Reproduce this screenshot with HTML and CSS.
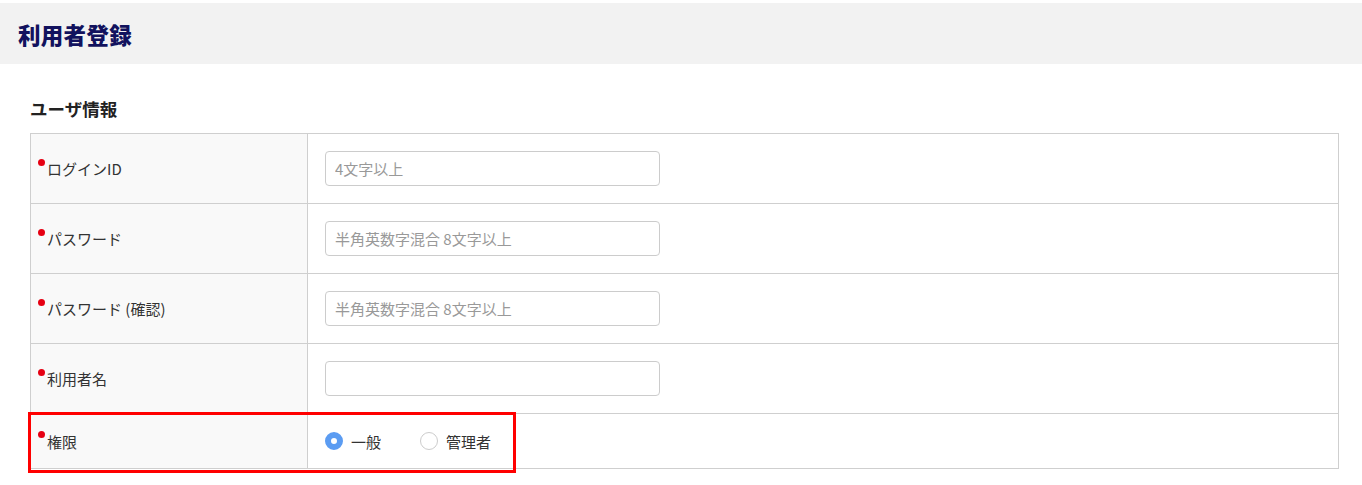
FILE: index.html
```html
<!DOCTYPE html>
<html lang="ja">
<head>
<meta charset="utf-8">
<title>利用者登録</title>
<link rel="stylesheet" href="styles.css">
</head>
<body>
<header class="page-header">
  <h1 class="page-title">利用者登録</h1>
</header>
<main class="content">
  <h2 class="section-title">ユーザ情報</h2>
  <div class="form-wrap">
    <div class="form">
      <div class="row">
        <div class="label"><span class="req"></span>ログインID</div>
        <div class="field"><input class="text-input" type="text" placeholder="4文字以上"></div>
      </div>
      <div class="row">
        <div class="label"><span class="req"></span>パスワード</div>
        <div class="field"><input class="text-input" type="password" placeholder="半角英数字混合 8文字以上"></div>
      </div>
      <div class="row">
        <div class="label"><span class="req"></span>パスワード (確認)</div>
        <div class="field"><input class="text-input" type="password" placeholder="半角英数字混合 8文字以上"></div>
      </div>
      <div class="row">
        <div class="label"><span class="req"></span>利用者名</div>
        <div class="field"><input class="text-input" type="text"></div>
      </div>
      <div class="row row-last">
        <div class="label"><span class="req"></span>権限</div>
        <div class="field radios">
          <label class="radio"><span class="radio-mark checked"></span>一般</label>
          <label class="radio"><span class="radio-mark"></span>管理者</label>
        </div>
      </div>
    </div>
    <div class="highlight"></div>
  </div>
</main>
</body>
</html>
```

FILE: styles.css
```css
* { box-sizing: border-box; }
html, body { margin: 0; padding: 0; background: #fff; }
body {
  font-family: "Noto Sans CJK JP", "Noto Sans", "Liberation Sans", sans-serif;
  color: #333;
}
.page-header {
  margin-top: 3px;
  height: 61px;
  background: #f2f2f2;
  display: flex;
  align-items: center;
  padding-left: 18px;
}
.page-title {
  margin: 0;
  font-size: 22.5px;
  font-weight: 900;
  color: #12125e;
  letter-spacing: 0.3px;
}
.content {
  padding: 0 23px 16px 30px;
}
.section-title {
  margin: 0;
  height: 69px;
  padding-top: 33px;
  font-size: 17.5px;
  font-weight: 700;
  color: #222;
  line-height: 24px;
}
.form-wrap { position: relative; }
.form {
  border: 1px solid #cfcfcf;
}
.row {
  display: grid;
  grid-template-columns: 277px 1fr;
  border-top: 1px solid #cfcfcf;
  height: 70px;
}
.row:first-child { border-top: none; height: 69px; }
.row-last { height: 55px; }
.label {
  background: #f9f9f9;
  border-right: 1px solid #cfcfcf;
  display: flex;
  align-items: center;
  padding-left: 7px;
  font-size: 15px;
  color: #333;
}
.req {
  width: 7px;
  height: 7px;
  border-radius: 50%;
  background: #e60012;
  align-self: center;
  margin-top: -13px;
  margin-right: 2px;
}
.field {
  display: flex;
  align-items: center;
  padding-left: 17px;
}
.text-input {
  width: 335px;
  height: 35px;
  border: 1px solid #ccc;
  border-radius: 4px;
  padding: 0 9px;
  font-family: inherit;
  font-size: 15px;
  color: #333;
  background: #fff;
  outline: none;
}
.text-input::placeholder { color: #999; }
.radios { gap: 39px; }
.radio {
  display: flex;
  align-items: center;
  font-size: 15px;
  color: #333;
}
.radio-mark {
  width: 18px;
  height: 18px;
  border-radius: 50%;
  border: 1px solid #ccc;
  background: #fff;
  margin-right: 8px;
}
.radio-mark.checked {
  border: 6px solid #5b9cf2;
  background: #fff;
}
.highlight {
  position: absolute;
  left: -2px;
  bottom: -4px;
  width: 488px;
  height: 61px;
  border: 3px solid #f00;
  pointer-events: none;
}
```
